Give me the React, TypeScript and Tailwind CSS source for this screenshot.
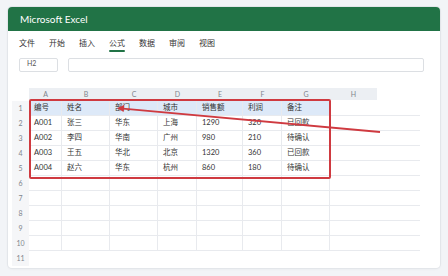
import React from "react";

const cols = [
  { k: "A", w: "w-[33px]" },
  { k: "B", w: "w-[48px]" },
  { k: "C", w: "w-[48px]" },
  { k: "D", w: "w-[39px]" },
  { k: "E", w: "w-[46px]" },
  { k: "F", w: "w-[39px]" },
  { k: "G", w: "w-[48px]" },
  { k: "H", w: "w-[47px]" },
];

const data: string[][] = [
  ["编号", "姓名", "部门", "城市", "销售额", "利润", "备注"],
  ["A001", "张三", "华东", "上海", "1290", "320", "已回款"],
  ["A002", "李四", "华南", "广州", "980", "210", "待确认"],
  ["A003", "王五", "华北", "北京", "1320", "360", "已回款"],
  ["A004", "赵六", "华东", "杭州", "860", "180", "待确认"],
];

const menu = ["文件", "开始", "插入", "公式", "数据", "审阅", "视图"];

export default function App() {
  const rows = Array.from({ length: 11 }, (_, i) => i);
  return (
    <div
      className="w-[448px] h-[276px] bg-[#f2f4f7] pt-[7px] pl-[8px]"
      style={{ fontFamily: "Lato, 'Noto Sans CJK SC', sans-serif" }}
    >
      <div className="w-[432px] h-[261px] bg-white rounded-[4px] overflow-hidden shadow-[0_0_0_1px_#e3e6ea,0_1px_3px_rgba(0,0,0,0.06)]">
        <div className="h-[24px] bg-[#217346] flex items-center pl-[12px] text-white text-[10px] leading-none">
          Microsoft Excel
        </div>
        <div className="flex pl-[11px] pt-[7px] gap-[14px]">
          {menu.map((m) => (
            <div key={m} className="flex flex-col items-center">
              <span className="text-[8px] leading-[10px] text-[#333]">{m}</span>
              <span
                className={
                  m === "公式"
                    ? "mt-[2px] h-[2px] w-[16px] bg-[#217346] rounded-full"
                    : "mt-[2px] h-[2px] w-[16px]"
                }
              />
            </div>
          ))}
        </div>
        <div className="flex pl-[11px] mt-[6px] gap-[10px]">
          <div className="w-[39px] h-[14px] border border-[#dcdfe3] rounded-[2px] pl-[7px] text-[7px] leading-[9px] text-[#555]">
            H2
          </div>
          <div className="w-[356px] h-[14px] border border-[#dcdfe3] rounded-[2px]" />
        </div>
        <div className="relative mt-[16px] ml-[4px]">
          <div className="flex h-[12px]">
            <div className="w-[17px]" />
            {cols.map((c) => (
              <div
                key={c.k}
                className={`${c.w} bg-[#eceff3] flex items-center justify-center text-[7px] text-[#80858d]`}
              >
                {c.k}
              </div>
            ))}
          </div>
          <div className="mt-[1px]">
            {rows.map((r) => (
              <div key={r} className="flex h-[15px]">
                <div className="w-[17px] bg-[#f5f6f8] flex items-center justify-center text-[7px] text-[#80858d]">
                  {r + 1}
                </div>
                {cols.map((c, ci) => {
                  const txt = data[r]?.[ci] ?? "";
                  const blue = r === 0 && ci < 7;
                  const border =
                    r < 10
                      ? ci < 7
                        ? "border-b border-r border-[#e8eaee]"
                        : "border-b border-[#e8eaee]"
                      : "";
                  return (
                    <div
                      key={c.k}
                      className={`${c.w} ${border} ${blue ? "bg-[#dde9f8]" : ""} flex items-center pl-[5px] text-[7.5px] text-[#333] whitespace-nowrap`}
                    >
                      {txt}
                    </div>
                  );
                })}
                <div className={`w-[43px] ${r < 10 ? "border-b border-[#e8eaee]" : ""}`} />
              </div>
            ))}
          </div>
          <div className="absolute left-[17px] top-[11px] w-[302px] h-[80px] border-2 border-[#cf3a40] rounded-[2px]" />
          <svg
            className="absolute left-0 top-0 overflow-visible"
            width="420"
            height="180"
          >
            <line x1="368" y1="44" x2="111" y2="20.6" stroke="#cf3a40" strokeWidth="1.8" />
            <polygon points="105,20 112.3,17.1 111.6,24.1" fill="#cf3a40" />
          </svg>
        </div>
      </div>
    </div>
  );
}
